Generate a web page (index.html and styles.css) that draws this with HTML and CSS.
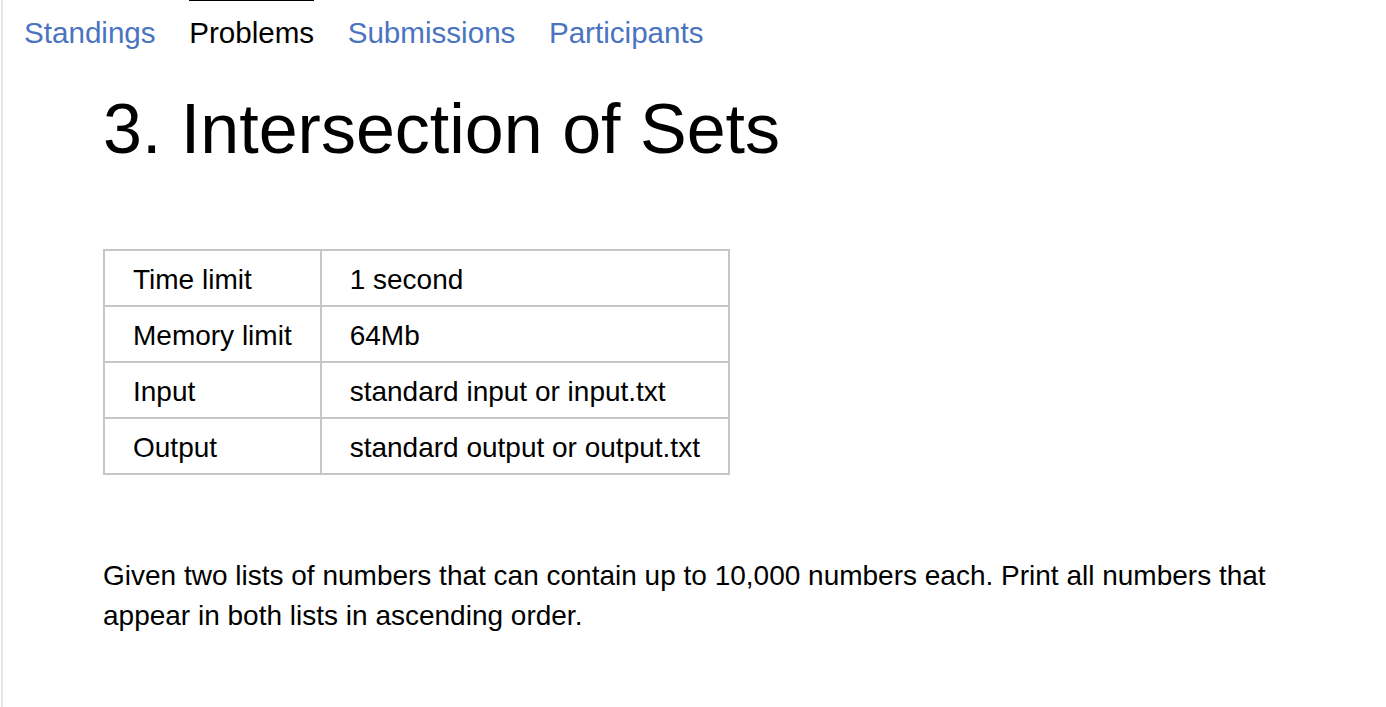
FILE: index.html
```html
<!DOCTYPE html>
<html>
<head>
<meta charset="utf-8">
<link rel="stylesheet" href="styles.css">
</head>
<body>
<div class="page">
  <nav class="tabs">
    <a class="tab" href="#">Standings</a>
    <a class="tab active" href="#">Problems</a>
    <a class="tab" href="#">Submissions</a>
    <a class="tab" href="#">Participants</a>
  </nav>
  <main class="content">
    <h1 class="title">3. Intersection of Sets</h1>
    <table class="limits">
      <tr><td>Time limit</td><td>1 second</td></tr>
      <tr><td>Memory limit</td><td>64Mb</td></tr>
      <tr><td>Input</td><td>standard input or input.txt</td></tr>
      <tr><td>Output</td><td>standard output or output.txt</td></tr>
    </table>
    <p class="statement">Given two lists of numbers that can contain up to 10,000 numbers each. Print all numbers that appear in both lists in ascending order.</p>
  </main>
</div>
</body>
</html>
```
FILE: styles.css
```css
html, body {
  margin: 0;
  padding: 0;
  background: #fff;
}
body {
  font-family: "Liberation Sans", Arial, sans-serif;
  color: #000;
  padding-left: 1px;
}
.page {
  border-left: 2px solid #e6e6e6;
  min-height: 707px;
  box-sizing: border-box;
}
.tabs {
  display: flex;
  gap: 33.5px;
  padding-left: 21px;
}
.tab {
  font-size: 29.6px;
  line-height: 34px;
  padding-top: 15px;
  border-top: 1px solid transparent;
  color: #4a74c0;
  text-decoration: none;
}
.tab.active {
  color: #000;
  border-top-color: #000;
}
.content {
  padding: 0 100px;
}
.title {
  margin: 39px 0 0;
  font-size: 70px;
  font-weight: normal;
  line-height: 80px;
}
.limits {
  margin-top: 80px;
  border-collapse: collapse;
  border: 2px solid #c6c6c6;
  font-size: 28px;
  line-height: 32px;
}
.limits td {
  border: 2px solid #c6c6c6;
  padding: 13px 28px 9px;
  white-space: nowrap;
}
.statement {
  margin: 81px 0 0;
  font-size: 28px;
  line-height: 40px;
}
```
